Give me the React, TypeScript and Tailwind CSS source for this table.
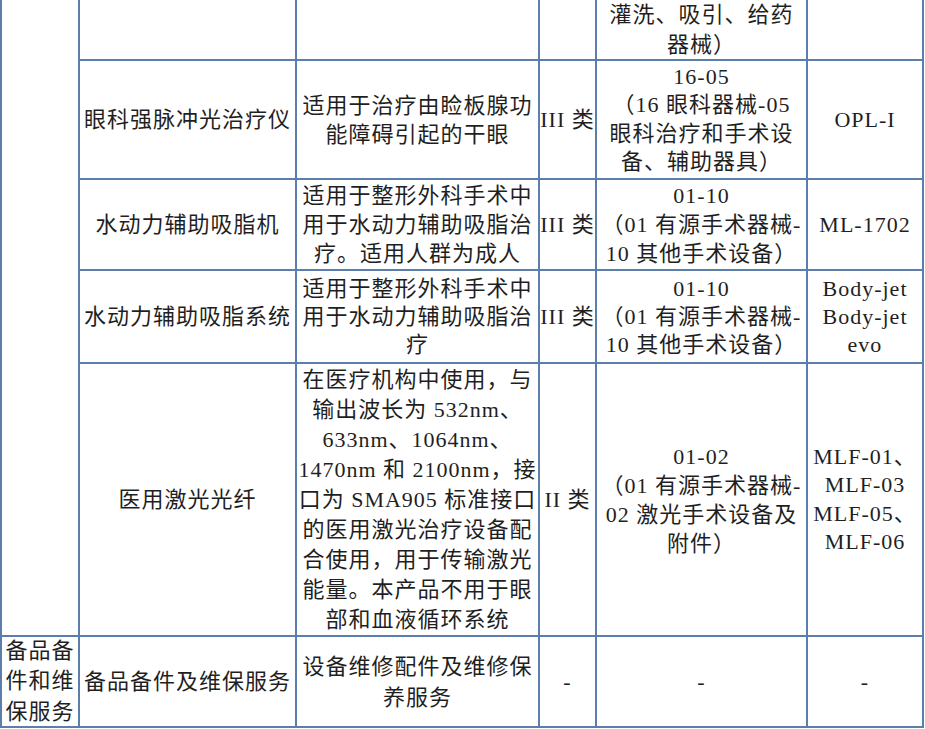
const font = { fontFamily: '"Liberation Serif", "Noto Sans CJK SC", serif' };

type CellProps = { lines?: string[]; leading?: string; className?: string };

const Cell = ({ lines = [], leading = "leading-[29px]", className = "" }: CellProps) => (
  <div
    className={`bg-white flex flex-col items-center justify-center text-center whitespace-nowrap text-[22px] tracking-[1px] text-[#1f1f1f] ${leading} ${className}`}
  >
    {lines.map((l, i) => (
      <span key={i}>{l}</span>
    ))}
  </div>
);

export default function App() {
  return (
    <div className="w-[925px] h-[729px] bg-white overflow-hidden" style={font}>
      <div className="grid w-[924px] grid-cols-[76px_215px_241px_55px_209px_114px] grid-rows-[59px_117px_89px_91px_271px_89px] gap-[2px] bg-[#5b7eaa] px-[2px] pb-[2px]">
        {/* left category column, cut off above */}
        <Cell className="row-span-5" />

        {/* row 1 (partial) */}
        <Cell />
        <Cell />
        <Cell />
        <Cell lines={["灌洗、吸引、给药", "器械）"]} leading="leading-[30px]" />
        <Cell />

        {/* row 2 */}
        <Cell lines={["眼科强脉冲光治疗仪"]} />
        <Cell lines={["适用于治疗由睑板腺功", "能障碍引起的干眼"]} />
        <Cell lines={["III 类"]} />
        <Cell lines={["16-05", "（16 眼科器械-05", "眼科治疗和手术设", "备、辅助器具）"]} leading="leading-[28.5px]" />
        <Cell lines={["OPL-I"]} />

        {/* row 3 */}
        <Cell lines={["水动力辅助吸脂机"]} />
        <Cell lines={["适用于整形外科手术中", "用于水动力辅助吸脂治", "疗。适用人群为成人"]} />
        <Cell lines={["III 类"]} />
        <Cell lines={["01-10", "（01 有源手术器械-", "10 其他手术设备）"]} />
        <Cell lines={["ML-1702"]} />

        {/* row 4 */}
        <Cell lines={["水动力辅助吸脂系统"]} />
        <Cell lines={["适用于整形外科手术中", "用于水动力辅助吸脂治", "疗"]} leading="leading-[28px]" />
        <Cell lines={["III 类"]} />
        <Cell lines={["01-10", "（01 有源手术器械-", "10 其他手术设备）"]} leading="leading-[28px]" />
        <Cell lines={["Body-jet", "Body-jet", "evo"]} leading="leading-[28px]" />

        {/* row 5 */}
        <Cell lines={["医用激光光纤"]} />
        <Cell
          lines={[
            "在医疗机构中使用，与",
            "输出波长为 532nm、",
            "633nm、1064nm、",
            "1470nm 和 2100nm，接",
            "口为 SMA905 标准接口",
            "的医用激光治疗设备配",
            "合使用，用于传输激光",
            "能量。本产品不用于眼",
            "部和血液循环系统",
          ]}
          leading="leading-[30px]"
        />
        <Cell lines={["II 类"]} />
        <Cell lines={["01-02", "（01 有源手术器械-", "02 激光手术设备及", "附件）"]} />
        <Cell lines={["MLF-01、", "MLF-03", "MLF-05、", "MLF-06"]} leading="leading-[28.5px]" />

        {/* row 6 */}
        <Cell lines={["备品备", "件和维", "保服务"]} leading="leading-[30.5px]" />
        <Cell lines={["备品备件及维保服务"]} />
        <Cell lines={["设备维修配件及维修保", "养服务"]} leading="leading-[31px]" />
        <Cell lines={["-"]} />
        <Cell lines={["-"]} />
        <Cell lines={["-"]} />
      </div>
    </div>
  );
}
